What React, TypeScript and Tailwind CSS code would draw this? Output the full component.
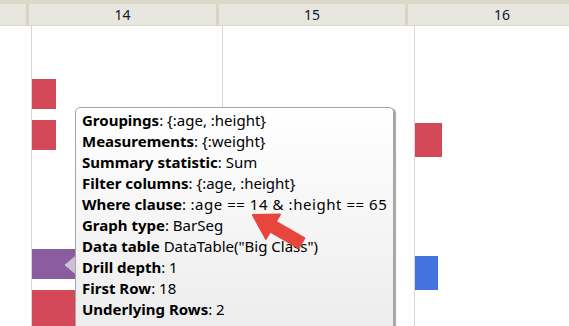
import React from "react";

const rows: [string, string, string, string][] = [
  ["Groupings", ":", " {:age, :height}", ""],
  ["Measurements", ":", " {:weight}", ""],
  ["Summary statistic", ":", " Sum", ""],
  ["Filter columns", ":", " {:age, :height}", ""],
  ["Where clause", ":", " :age == 14 & :height == 65", "tracking-[0.55px]"],
  ["Graph type", ":", " BarSeg", ""],
  ["Data table", "", " DataTable(\"Big Class\")", ""],
  ["Drill depth", ":", " 1", ""],
  ["First Row", ":", " 18", ""],
  ["Underlying Rows", ":", " 2", ""],
];

export default function App() {
  return (
    <div
      className="relative w-[569px] h-[326px] overflow-hidden bg-white text-black"
      style={{ fontFamily: '"Noto Sans", "Open Sans", sans-serif' }}
    >
      {/* header */}
      <div className="h-[4px] bg-[#dbd8c7]" />
      <div className="flex h-[22px] bg-[#e8e7df] border-b border-[#d9d7c9] text-[14px] leading-[22px] text-[#141428]">
        <div className="w-[29px] shrink-0 border-r-[3px] border-[#d8d5c5]" />
        <div className="w-[190px] shrink-0 border-r-[3px] border-[#d8d5c5] text-center">14</div>
        <div className="w-[189px] shrink-0 border-r-[3px] border-[#d8d5c5] text-center">15</div>
        <div className="w-[188px] shrink-0 text-center">16</div>
      </div>

      {/* body */}
      <div className="flex h-[300px]">
        <div className="w-[31px] shrink-0" />
        <div className="w-[191px] shrink-0 border-l border-[#d6d6d6] flex flex-col">
          <div className="mt-[53px] h-[33px] w-[24px] bg-[#d4495a]" />
          <div className="mt-[11px] h-[34px] w-[24px] bg-[#d4495a]" />
          <div className="mt-[99px] h-[33px] w-[50px] bg-[#8c5ca0]" />
          <div className="mt-[11px] h-[40px] w-[50px] bg-[#d4495a]" />
        </div>
        <div className="w-[192px] shrink-0 border-l border-[#d6d6d6]" />
        <div className="flex-1 border-l border-[#d6d6d6] flex flex-col">
          <div className="mt-[97px] h-[34px] w-[27px] bg-[#d4495a]" />
          <div className="mt-[99px] h-[34px] w-[23px] bg-[#4373df]" />
        </div>
      </div>

      {/* tooltip pointer */}
      <svg className="absolute left-[64px] top-[256px]" width="12" height="18" viewBox="0 0 12 18">
        <path d="M12 0 L1 9 L12 18 Z" fill="#cdbfd6" stroke="#d8d8d8" strokeWidth="0.8" />
      </svg>

      {/* tooltip */}
      <div className="absolute left-[75px] top-[107px] w-[319px] h-[240px] rounded-[5px] border border-[#a6a6a6] bg-gradient-to-b from-white to-[#ebebeb] shadow-[2px_1px_1px_rgba(0,0,0,0.35)] pl-[6px] pt-[2px] text-[15px] leading-[21px] whitespace-pre">
        {rows.map(([k, c, v, t]) => (
          <div key={k}>
            <span className="font-bold">{k}</span>
            {c}
            <span className={t}>{v}</span>
          </div>
        ))}
      </div>

      {/* red arrow */}
      <svg className="absolute left-[243px] top-[204px]" width="72" height="52" viewBox="0 0 72 52">
        <g transform="translate(10 11) rotate(30)">
          <polygon
            points="1,2 24,-12 24,-4 57,-4 57,7 24,7 24,16"
            fill="rgba(0,0,0,0.18)"
          />
          <polygon
            points="0,0 23,-14 23,-5.5 56,-5.5 56,5.5 23,5.5 23,14"
            fill="#e8463d"
            stroke="#e8463d"
            strokeWidth="2"
            strokeLinejoin="round"
          />
        </g>
      </svg>
    </div>
  );
}
